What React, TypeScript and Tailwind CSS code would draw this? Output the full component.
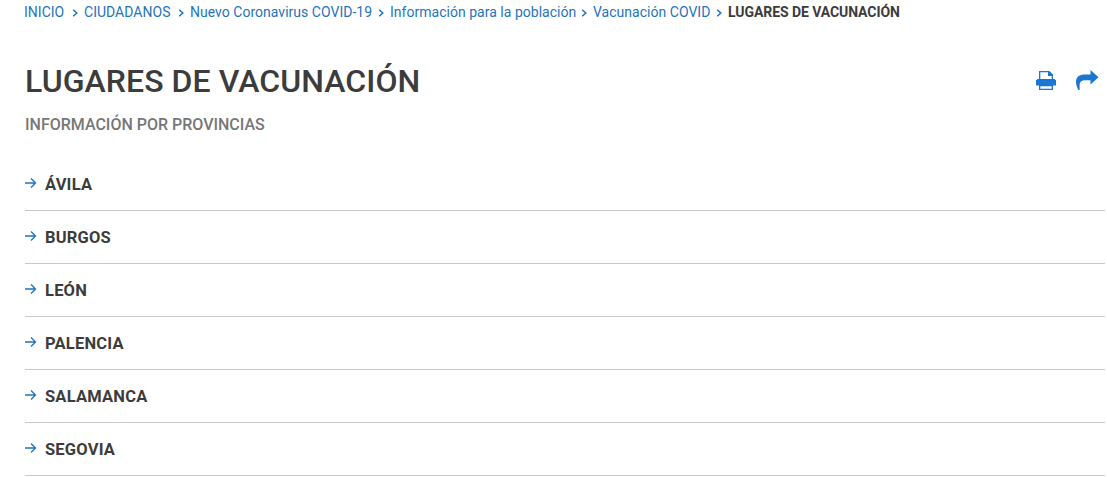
const crumbs = [
  { label: "INICIO", className: "w-[49px]" },
  { label: "CIUDADANOS", className: "w-[95px]" },
  { label: "Nuevo Coronavirus COVID-19", className: "w-[189px]" },
  { label: "Información para la población", className: "w-[192px]" },
  { label: "Vacunación COVID", className: "w-[124px]" },
]

const provinces = ["ÁVILA", "BURGOS", "LEÓN", "PALENCIA", "SALAMANCA", "SEGOVIA"]

function Breadcrumb() {
  return (
    <nav className="-ml-px flex h-6 items-center whitespace-nowrap text-sm tracking-[0.02px] text-[#1f74bd]">
      {crumbs.map((crumb) => (
        <div key={crumb.label} className="flex items-center">
          <a href="#" className={crumb.className}>{crumb.label}</a>
          <span className="w-[11px]">
            <svg className="mt-px -ml-px" width="7" height="8" viewBox="0 0 7 8" fill="none" stroke="currentColor" strokeWidth="1.5">
              <path d="M1.2 .7L4.8 4L1.2 7.3" />
            </svg>
          </span>
        </div>
      ))}
      <span className="font-bold tracking-[-0.07px] text-[#3c3c3c]">LUGARES DE VACUNACIÓN</span>
    </nav>
  )
}

function PrintIcon() {
  return (
    <svg width="20" height="20" viewBox="0 0 20 20" fill="currentColor">
      <path fillRule="evenodd" d="M3 1H13.5L17 4.5V9H19V10H20V15.5H17V20H3V15.5H0V10H1V9H3ZM4.3 2.2V9H15.7V6H12V2.2ZM4.3 16.3V18.7H15.7V16.3Z" />
    </svg>
  )
}

function ShareIcon() {
  return (
    <svg width="23" height="20" viewBox="0 0 23 20" fill="currentColor">
      <path d="M14.5 0L22.5 7.2L14.5 14.4V10.2H9C5.5 10.2 3.6 12 3.6 15V20H2.2C1 17 0 14.5 0 12C0 7 3.5 4.6 9 4.6H14.5Z" />
    </svg>
  )
}

function ProvinceRow({ name }: { name: string }) {
  return (
    <li className="h-[53px] border-b border-[#c8c8c8]">
      <a href="#" className="flex h-[52px] items-center">
        <svg className="-mt-[3px] w-5 shrink-0 text-[#1f74bd]" height="10" viewBox="0 0 20 10" fill="none" stroke="currentColor" strokeWidth="1.3">
          <path d="M0 5h10.5M6 .5L10.5 5L6 9.5" />
        </svg>
        <span className="mt-0.5">{name}</span>
      </a>
    </li>
  )
}

function App() {
  return (
    <main className="h-[477px] w-[1107px] overflow-hidden bg-white pl-[25px] pr-0.5 font-['Roboto',sans-serif] text-[#3c3c3c]">
      <Breadcrumb />
      <header className="mt-9 flex h-10 items-center justify-between">
        <h1 className="mt-0.5 text-[32px] leading-10 font-medium tracking-[0.06px]">LUGARES DE VACUNACIÓN</h1>
        <div className="mr-1.5 flex items-center gap-5 text-[#1976d2]">
          <a href="#" aria-label="Imprimir"><PrintIcon /></a>
          <a href="#" aria-label="Compartir"><ShareIcon /></a>
        </div>
      </header>
      <h2 className="mt-[13px] text-base leading-6 font-medium text-[#777]">INFORMACIÓN POR PROVINCIAS</h2>
      <ul className="mt-[21px] text-[16.5px] leading-6 font-bold tracking-[0.2px]">
        {provinces.map((name) => (
          <ProvinceRow key={name} name={name} />
        ))}
      </ul>
    </main>
  )
}

export default App
